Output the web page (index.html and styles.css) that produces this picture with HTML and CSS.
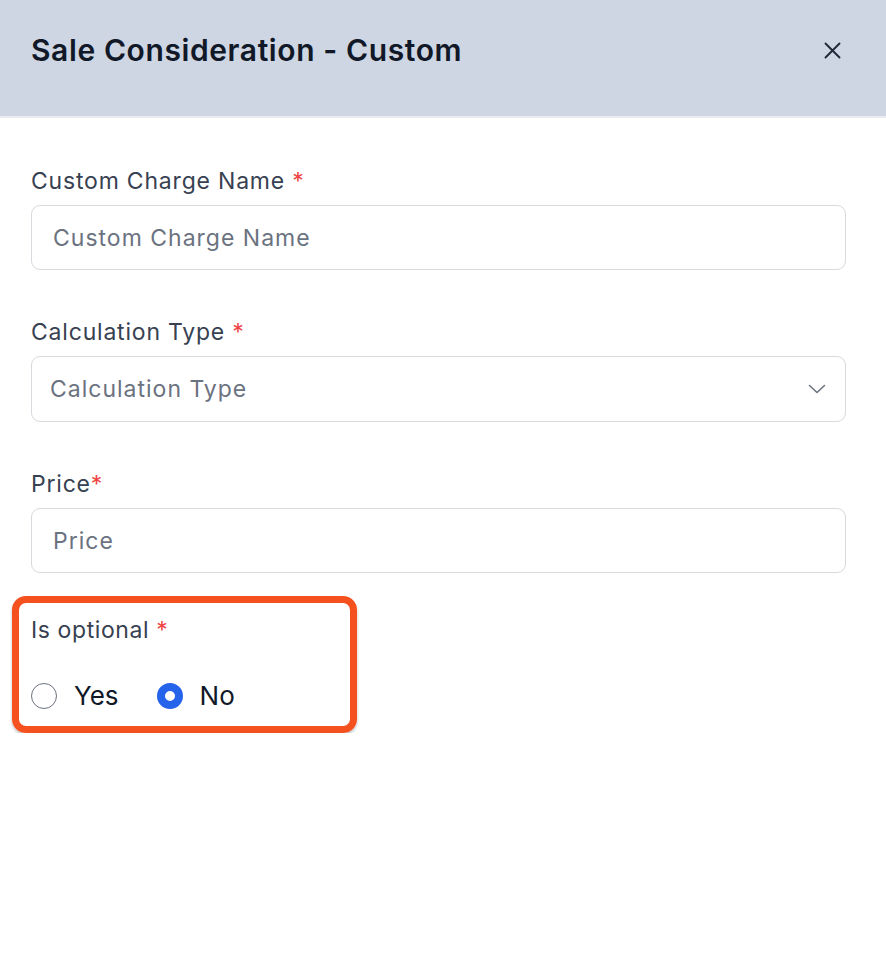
FILE: index.html
```html
<!DOCTYPE html>
<html lang="en">
<head>
  <meta charset="UTF-8" />
  <meta name="viewport" content="width=device-width, initial-scale=1.0" />
  <title>Sale Consideration - Custom</title>
  <link rel="stylesheet" href="styles.css">
</head>
<body>

  <header class="drawer-head">
    <h1>Sale Consideration - Custom</h1>
    <button class="close" type="button" aria-label="Close">
      <svg width="17" height="17" viewBox="0 0 17 17"><path d="M1.5 1.5 L15.5 15.5 M15.5 1.5 L1.5 15.5" stroke="#1f2937" stroke-width="1.9" stroke-linecap="round" fill="none"/></svg>
    </button>
  </header>

  <main class="drawer-body">
    <div class="field">
      <label for="chargeName">Custom Charge Name <span class="req">*</span></label>
      <input type="text" id="chargeName" placeholder="Custom Charge Name" />
    </div>

    <div class="field">
      <label for="calcType">Calculation Type <span class="req">*</span></label>
      <div class="select">
        <span class="select-text">Calculation Type</span>
        <svg width="18" height="10" viewBox="0 0 18 10"><path d="M1.5 1.5 L9 8.5 L16.5 1.5" stroke="#6b7280" stroke-width="1.6" stroke-linecap="round" stroke-linejoin="round" fill="none"/></svg>
      </div>
    </div>

    <div class="field">
      <label for="price">Price<span class="req">*</span></label>
      <input type="text" id="price" placeholder="Price" />
    </div>

    <div class="optional-box">
      <div class="opt-label">Is optional <span class="req">*</span></div>
      <div class="radios">
        <label class="radio"><span class="dot"></span>Yes</label>
        <label class="radio"><span class="dot on"></span>No</label>
      </div>
    </div>
  </main>

</body>
</html>
```

FILE: styles.css
```css
body {
  margin: 0;
  font-family: Inter, 'Noto Sans', sans-serif;
  background: #fff;
  color: #374151;
}
.drawer-head { height: 118px; background: #cdd6e2; border-bottom: 2px solid #e9edf2; display: flex; align-items: center; justify-content: space-between; padding: 0 45px 0 31px; box-sizing: border-box; }
.drawer-head h1 { margin: 0 0 16px; font-size: 30px; font-weight: 600; color: #111827; letter-spacing: 0.6px; }
.close { background: none; border: none; padding: 0; margin-bottom: 16px; cursor: pointer; display: flex; }
.drawer-body { padding: 48px 40px 0 31px; }
.field { margin-bottom: 47px; }
.field label { display: block; font-size: 23px; line-height: 30px; letter-spacing: 0.8px; margin-bottom: 9px; color: #374151; }
.req { color: #ef4444; }
input, .select { width: 100%; height: 65px; box-sizing: border-box; border: 1.5px solid #d6d9de; border-radius: 9px; font-family: inherit; font-size: 23px; letter-spacing: 1px; padding: 0 21px; color: #111827; background: #fff; }
input::placeholder { color: #6b7280; }
.select { display: flex; align-items: center; justify-content: space-between; padding: 0 19px 0 18px; height: 66px; }
.select-text { color: #6b7280; }
.optional-box { width: 345px; box-sizing: border-box; margin: -24px 0 0 -19px; padding: 12px 12px 14px 12px; border: 7px solid #f4511e; border-radius: 14px; box-shadow: 0 2px 3px rgba(0,0,0,0.25); }
.opt-label { font-size: 23px; line-height: 30px; letter-spacing: 0.6px; color: #374151; }
.radios { display: flex; gap: 38px; margin-top: 35px; }
.radio { display: flex; align-items: center; gap: 17px; font-size: 26px; line-height: 32px; color: #111827; }
.dot { width: 26px; height: 26px; border: 1.5px solid #6b7280; border-radius: 50%; box-sizing: border-box; }
.dot.on { border: 8px solid #2563eb; }
```
